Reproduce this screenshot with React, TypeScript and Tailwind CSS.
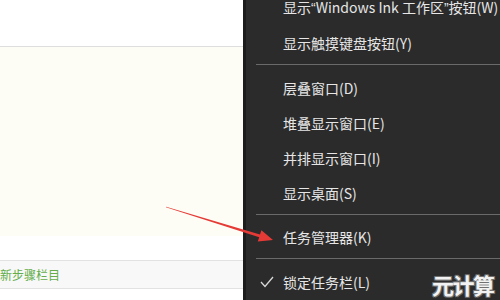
const font = { fontFamily: '"Noto Sans CJK SC", "Noto Sans", sans-serif' };

type Entry = { label: React.ReactNode; checked?: boolean } | "sep";

const Q = ({ c }: { c: string }) => (
  <span className="font-['Liberation_Sans',sans-serif]">{c}</span>
);

const entries: Entry[] = [
  {
    label: (
      <>
        显示<Q c="“" />Windows Ink 工作区<Q c="”" />按钮(W)
      </>
    ),
  },
  { label: "显示触摸键盘按钮(Y)" },
  "sep",
  { label: "层叠窗口(D)" },
  { label: "堆叠显示窗口(E)" },
  { label: "并排显示窗口(I)" },
  { label: "显示桌面(S)" },
  "sep",
  { label: "任务管理器(K)" },
  "sep",
  { label: "锁定任务栏(L)", checked: true },
];

const MenuRow = ({
  label,
  checked,
}: {
  label: React.ReactNode;
  checked?: boolean;
}) => (
  <div className="h-[36px] flex items-center relative">
    {checked && (
      <svg
        className="absolute left-[14px] top-[11px]"
        width="14"
        height="12"
        viewBox="0 0 14 12"
      >
        <polyline
          points="1,6 5,10.5 13,1"
          fill="none"
          stroke="#d8d8d8"
          strokeWidth="1.3"
        />
      </svg>
    )}
    <span className="pl-[37px] text-[14px] text-[#e6e6e6] whitespace-nowrap">
      {label}
    </span>
  </div>
);

export default function App() {
  return (
    <div
      className="relative w-[500px] h-[300px] overflow-hidden flex bg-white"
      style={font}
    >
      {/* page behind the menu */}
      <div className="w-[243px] shrink-0 flex flex-col">
        <div className="h-[47px] bg-white border-b border-[#dedede] shadow-[0_1px_2px_rgba(0,0,0,0.05)]" />
        <div className="h-[189px] bg-[#fdfdf5]" />
        <div className="h-[24px] bg-white" />
        <div className="h-[29px] bg-[#f8f8f8] border-y border-[#e2e2e2] flex items-center overflow-hidden">
          <span className="text-[12px] text-[#63ad4a] whitespace-nowrap">
            新步骤栏目
          </span>
        </div>
        <div className="flex-1 bg-white" />
      </div>

      <div className="w-[3px] shrink-0 bg-[#1c1c1c]" />

      {/* taskbar context menu */}
      <div className="flex-1 min-w-0 overflow-hidden bg-[#2b2b2b] flex flex-col -mt-[9px]">
        {entries.map((e, i) =>
          e === "sep" ? (
            <div key={i} className="h-[10px] pt-[3px] pl-[10px]">
              <div className="h-px bg-[#6a6a6a]" />
            </div>
          ) : (
            <MenuRow key={i} label={e.label} checked={e.checked} />
          )
        )}
      </div>

      {/* red annotation arrow */}
      <svg
        className="absolute inset-0 pointer-events-none"
        width="500"
        height="300"
        viewBox="0 0 500 300"
      >
        <polygon
          points="166.1,206.7 260,234.5 261.4,230.2 273,240 257.8,241.6 259.2,237.3 165.9,207.3"
          fill="#e63a36"
        />
      </svg>

      {/* watermark */}
      <div className="absolute left-[432px] top-[273px] text-[22px] leading-none font-bold text-[#f2f2f2] tracking-[-1.5px] [text-shadow:1px_1px_0_#707070,-1px_-1px_0_#707070,1px_-1px_0_#707070,-1px_1px_0_#707070,0_0_3px_#444]">
        元计算
      </div>
    </div>
  );
}
